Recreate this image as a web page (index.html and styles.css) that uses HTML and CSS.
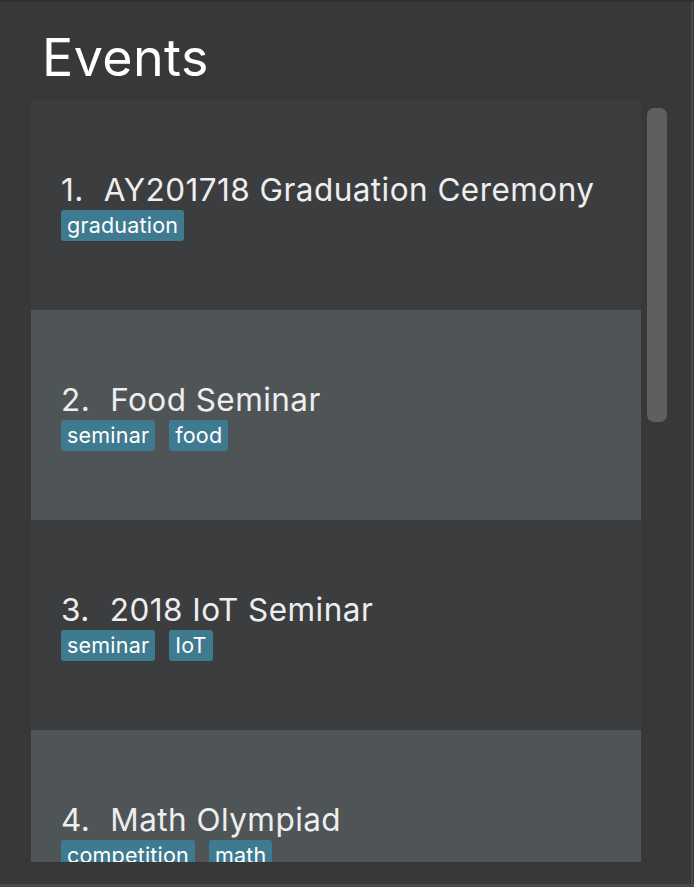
FILE: index.html
```html
<!DOCTYPE html>
<html>
<head>
<meta charset="utf-8">
<link rel="stylesheet" href="styles.css">
</head>
<body>
<div class="window">
  <div class="pane">
    <h1 class="title">Events</h1>
    <div class="list-wrap">
      <div class="list">
        <div class="row odd">
          <div class="cell">
            <div class="name"><span class="idx">1.</span>AY201718 Graduation Ceremony</div>
            <div class="tags"><span class="tag">graduation</span></div>
          </div>
        </div>
        <div class="row even">
          <div class="cell">
            <div class="name"><span class="idx">2.</span>Food Seminar</div>
            <div class="tags"><span class="tag">seminar</span><span class="tag">food</span></div>
          </div>
        </div>
        <div class="row odd">
          <div class="cell">
            <div class="name"><span class="idx">3.</span>2018 IoT Seminar</div>
            <div class="tags"><span class="tag">seminar</span><span class="tag">IoT</span></div>
          </div>
        </div>
        <div class="row even">
          <div class="cell">
            <div class="name"><span class="idx">4.</span>Math Olympiad</div>
            <div class="tags"><span class="tag">competition</span><span class="tag">math</span></div>
          </div>
        </div>
      </div>
      <div class="scrollbar"><div class="thumb"></div></div>
    </div>
  </div>
  <div class="edge-right"></div>
</div>
</body>
</html>
```
FILE: styles.css
```css
html, body {
  margin: 0;
  padding: 0;
  background: #383838;
}
body {
  width: 694px;
  height: 887px;
  overflow: hidden;
  font-family: "Inter", "Noto Sans", sans-serif;
}
.window {
  width: 694px;
  height: 887px;
  box-sizing: border-box;
  border-top: 2px solid #303030;
  border-bottom: 3px solid #4a4a4a;
  display: flex;
}
.pane {
  flex: 1;
  display: flex;
  flex-direction: column;
  padding-left: 31px;
}
.edge-right {
  width: 2px;
  margin-right: 1px;
  background: #4a4a4a;
}
.title {
  margin: 0;
  height: 98px;
  box-sizing: border-box;
  padding: 25px 0 0 11px;
  font-size: 52px;
  font-weight: 400;
  color: #ffffff;
  line-height: 62px;
  letter-spacing: 0.4px;
}
.list-wrap {
  display: flex;
  height: 762px;
}
.list {
  width: 610px;
  height: 762px;
  overflow: hidden;
}
.row {
  height: 210px;
  display: flex;
  align-items: center;
  box-sizing: border-box;
  padding-left: 30px;
}
.odd { background: #3c3d3f; }
.even { background: #4f5557; }
.cell {
  display: flex;
  flex-direction: column;
  margin-top: 2px;
}
.name {
  color: #eeeeee;
  font-size: 31.5px;
  line-height: 36px;
  letter-spacing: 0.45px;
  white-space: nowrap;
}
.idx {
  margin-right: 20px;
}
.tags {
  display: flex;
  gap: 14px;
  margin-top: 2px;
}
.tag {
  display: block;
  background: #3e7b91;
  color: #ffffff;
  font-size: 21.5px;
  line-height: 31px;
  height: 31px;
  padding: 0 6px;
  border-radius: 3px;
  letter-spacing: 0.2px;
}
.scrollbar {
  width: 20px;
  margin-left: 6px;
  padding-top: 8px;
}
.thumb {
  height: 314px;
  background: #5f5f5f;
  border-radius: 7px;
}
```
